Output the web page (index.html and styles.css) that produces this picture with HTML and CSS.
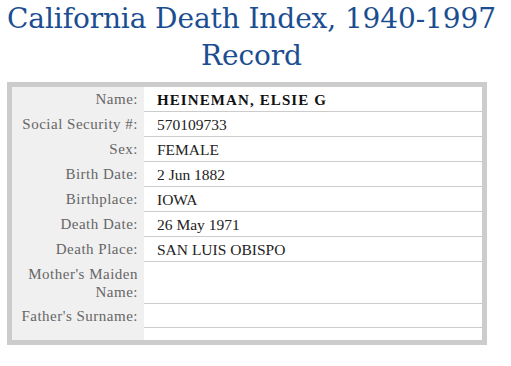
FILE: index.html
```html
<!DOCTYPE html>
<html>
<head>
<meta charset="utf-8">
<link rel="stylesheet" href="styles.css">
</head>
<body>
<h1 class="title">California Death Index, 1940-1997 Record</h1>
<div class="record">
  <table class="fields">
    <tr><th>Name:</th><td class="name">HEINEMAN, ELSIE G</td></tr>
    <tr><th>Social Security #:</th><td>570109733</td></tr>
    <tr><th>Sex:</th><td>FEMALE</td></tr>
    <tr><th>Birth Date:</th><td>2 Jun 1882</td></tr>
    <tr><th>Birthplace:</th><td>IOWA</td></tr>
    <tr><th>Death Date:</th><td>26 May 1971</td></tr>
    <tr><th>Death Place:</th><td>SAN LUIS OBISPO</td></tr>
    <tr><th>Mother's Maiden Name:</th><td></td></tr>
    <tr><th>Father's Surname:</th><td></td></tr>
    <tr class="spacer"><th></th><td></td></tr>
  </table>
</div>
</body>
</html>
```
FILE: styles.css
```css
html, body {
  margin: 0;
  padding: 0;
  background: #fff;
}
body {
  font-family: "Liberation Serif", "Times New Roman", serif;
}
.title {
  margin: 0;
  padding: 0 6px 0 4px;
  width: 495px;
  text-align: center;
  font-family: "DejaVu Serif", serif;
  font-weight: normal;
  font-size: 28px;
  line-height: 37px;
  letter-spacing: -0.1px;
  color: #1b4e91;
}
.record {
  margin: 8px 0 0 7px;
  width: 470px;
  border: 5px solid #cccccc;
}
.fields {
  width: 100%;
  border-collapse: collapse;
  border-spacing: 0;
}
.fields th {
  width: 126px;
  padding: 3px 6px 3px 0;
  background: #f0f0f0;
  text-align: right;
  vertical-align: top;
  font-weight: normal;
  font-size: 15px;
  line-height: 18px;
  letter-spacing: 0.5px;
  color: #666;
}
.fields td {
  padding: 4px 0 2px 13px;
  border-bottom: 1px solid #cccccc;
  vertical-align: top;
  font-size: 15.5px;
  line-height: 18px;
  color: #222;
}
.fields .name {
  font-weight: bold;
  font-size: 15px;
  letter-spacing: 1.1px;
  color: #111;
}
.fields .spacer th,
.fields .spacer td {
  height: 12px;
  padding: 0;
  border-bottom: none;
}
```
